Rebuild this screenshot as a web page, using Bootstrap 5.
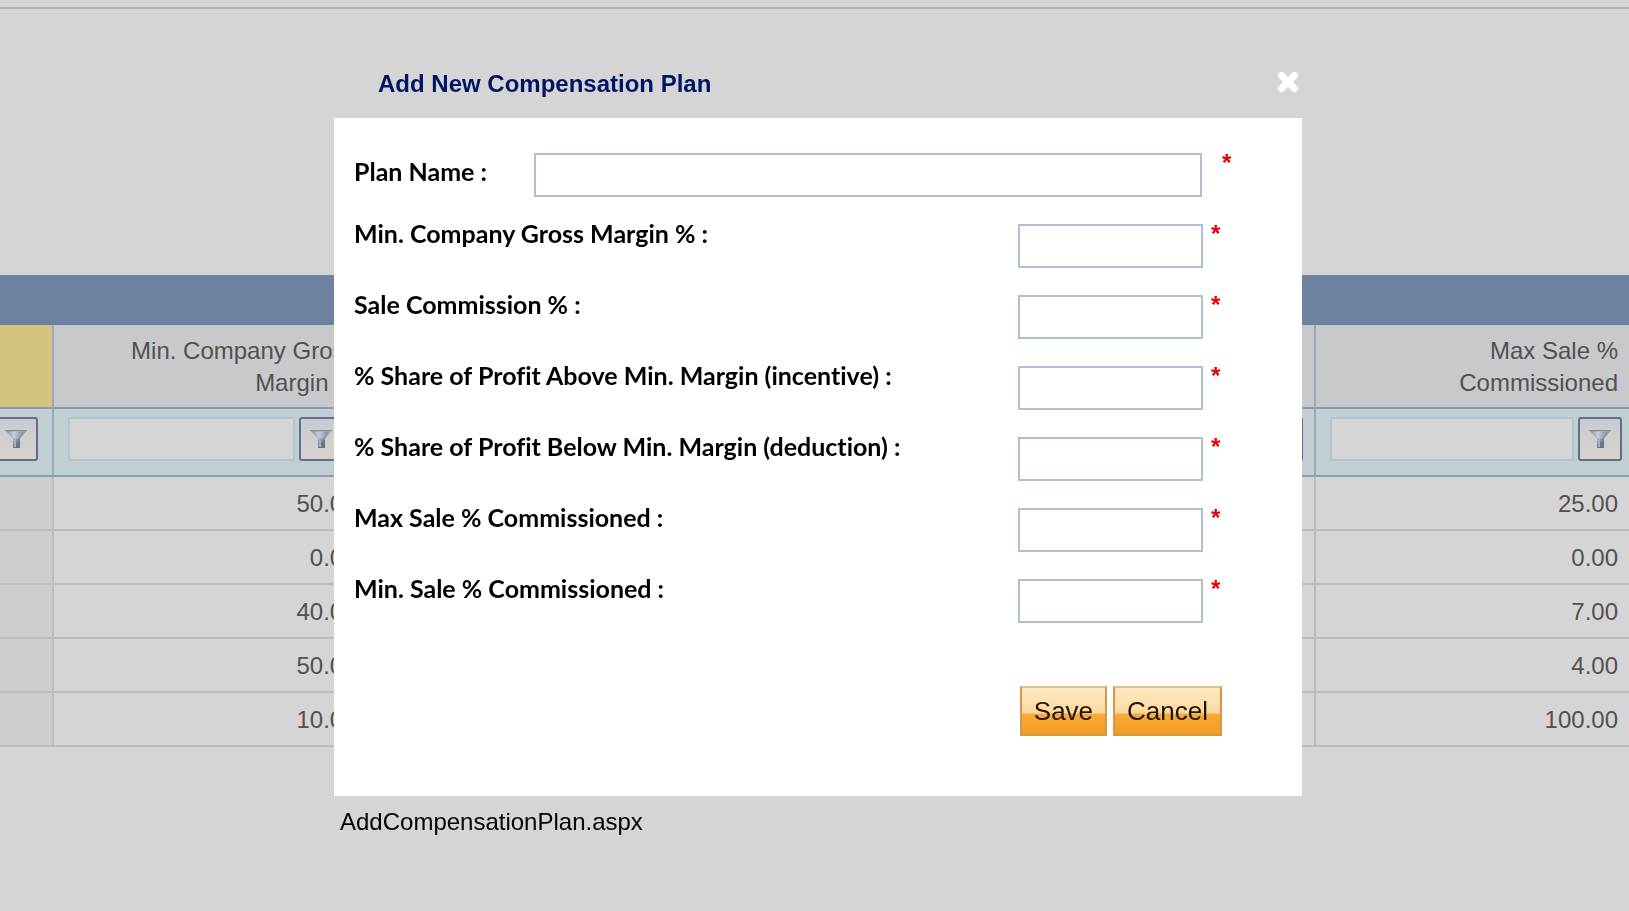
<!DOCTYPE html>
<html lang="en">
<head>
<meta charset="utf-8">
<meta name="viewport" content="width=device-width, initial-scale=1">
<title>Compensation Plans</title>
<link href="https://cdn.jsdelivr.net/npm/bootstrap@5.3.0/dist/css/bootstrap.min.css" rel="stylesheet">
<style>
  body { background: #d5d5d5; color: #515151; font-family: "Liberation Sans", Arial, sans-serif; font-size: 24px; line-height: 32px; overflow: hidden; }
  .page-top { height: 9px; border-bottom: 2px solid #b0b0b0; margin-bottom: 266px; }
  .grid-band { height: 50px; background: #6d829f; }
  .plan-grid { table-layout: fixed; width: 100%; border-collapse: separate; border-spacing: 0; }
  .plan-grid .col-name { width: 54px; }
  .plan-grid .col-last { width: 313px; }
  .plan-grid th, .plan-grid td { border: 0 solid #b9bdc3; border-width: 0 2px 2px 0; padding: 2px 11px 0 12px; text-align: right; font-weight: 400; }
  .plan-grid tr > :last-child { border-right-width: 0; }
  .plan-grid thead th, .plan-grid thead td { border-bottom-color: #8a9bb5; border-right-color: #9aaac3; }
  .plan-grid thead th { height: 84px; background: #c8c9cb; }
  .plan-grid thead th.sorted { background: #d4c481; }
  .plan-grid thead td { height: 68px; background: #c1cfd2; padding: 8px 7px 14px 14px; }
  .plan-grid thead td:first-child { padding-left: 0; padding-right: 14px; }
  .plan-grid tbody td { height: 54px; }
  .plan-grid tbody td:first-child { background: #cdcdcd; }
  .filter-box { min-width: 0; height: 44px; border: 2px solid #b5c4d3; border-radius: 0; background: #d5d5d5; }
  .filter-btn { flex: none; width: 44px; height: 44px; padding: 0; border: 2px solid #5d708c; border-radius: 3px; background: linear-gradient(#c9cbd0, #d3d0cf 60%, #d6d2d0); display: flex; align-items: center; justify-content: center; }
  .filter-short { padding-right: 18px; }
  .plan-modal { padding-left: 7px; color: #000; }
  .plan-modal .modal-dialog { max-width: 968px; margin: 0 auto; pointer-events: auto; }
  .plan-head { height: 118px; padding: 68px 3px 0 44px; }
  .plan-head h1 { font-size: 24px; line-height: 32px; font-weight: 700; color: #001464; margin: 0; }
  .close-x { border: 0; padding: 0; background: none; height: 28px; display: flex; align-items: center; }
  .plan-form { background: #fff; padding: 30px 71px 60px 20px; }
  .form-line { height: 71px; }
  .form-line label { font-family: Lato, sans-serif; font-size: 25px; font-weight: 700; line-height: 28px; font-variant-ligatures: none; }
  .form-line .first-label { width: 180px; padding-top: 9px; }
  .entry { height: 44px; margin-top: 5px; border: 2px solid #afc0d3; border-radius: 0; }
  .entry-num { width: 185px; flex: none; }
  .req { width: 28px; flex: none; line-height: 30px; font-weight: 700; color: #e60000; padding-left: 8px; }
  .req-wide { width: 29px; padding-left: 20px; }
  .form-actions { margin-top: 41px; padding-right: 9px; gap: 6px; }
  .gold-btn { height: 50px; padding: 0 12px; border: 2px solid #cf9a4a; border-top: 2px solid #dcc190; border-radius: 0; color: #1e1608; font-size: 26px; line-height: 44px; background: linear-gradient(#ffeac0, #ffd8a0 54%, #f9a935 57%, #f39d20); }
  .gold-btn:hover { background: #f9a935; }
  .page-name { padding: 10px 6px; }
</style>
</head>
<body>
<svg width="0" height="0" class="position-absolute" aria-hidden="true">
  <defs>
    <linearGradient id="steel" x1="0" x2="1" y1="0" y2="1">
      <stop offset="0" stop-color="#7d8894"/><stop offset=".4" stop-color="#a9bac8"/><stop offset=".65" stop-color="#6c7987"/><stop offset="1" stop-color="#5c6671"/>
    </linearGradient>
    <linearGradient id="shine" x1="0" x2="1">
      <stop offset="0" stop-color="#93a3b1"/><stop offset=".4" stop-color="#c2d2e0"/><stop offset="1" stop-color="#7f8d9b"/>
    </linearGradient>
    <symbol id="funnel" viewBox="0 0 22 20">
      <path d="M0 1h22l-7 8.500V19H8V9.500z" fill="url(#steel)"/>
      <path d="M2.500 2.500h16L13 9.500h-3.500z" fill="url(#shine)"/>
      <path d="M0 1.500h22" stroke="#7f8a96"/>
      <path d="M10 9.500v8.500" stroke="#a3b3c1" stroke-width="2"/>
    </symbol>
  </defs>
</svg>

<header class="page-top"></header>
<main>
  <div class="grid-band"></div>
  <table class="plan-grid">
    <colgroup><col class="col-name"><col><col><col><col><col class="col-last"></colgroup>
    <thead>
      <tr>
        <th class="sorted"></th>
        <th>Min. Company Gross Margin %</th>
        <th></th><th></th><th></th>
        <th>Max Sale % Commissioned</th>
      </tr>
      <tr>
        <td><div class="d-flex justify-content-end"><button class="filter-btn" type="button" aria-label="Filter"><svg width="22" height="20"><use href="#funnel"/></svg></button></div></td>
        <td><div class="d-flex gap-1 filter-short"><input class="form-control filter-box" aria-label="Filter gross margin"><button class="filter-btn" type="button" aria-label="Filter"><svg width="22" height="20"><use href="#funnel"/></svg></button></div></td>
        <td></td><td></td>
        <td><div class="d-flex gap-1 pe-1"><input class="form-control filter-box" aria-label="Filter share"><button class="filter-btn" type="button" aria-label="Filter"><svg width="22" height="20"><use href="#funnel"/></svg></button></div></td>
        <td><div class="d-flex gap-1"><input class="form-control filter-box" aria-label="Filter max sale"><button class="filter-btn" type="button" aria-label="Filter"><svg width="22" height="20"><use href="#funnel"/></svg></button></div></td>
      </tr>
    </thead>
    <tbody>
      <tr><td></td><td>50.00</td><td></td><td></td><td></td><td>25.00</td></tr>
      <tr><td></td><td>0.00</td><td></td><td></td><td></td><td>0.00</td></tr>
      <tr><td></td><td>40.00</td><td></td><td></td><td></td><td>7.00</td></tr>
      <tr><td></td><td>50.00</td><td></td><td></td><td></td><td>4.00</td></tr>
      <tr><td></td><td>10.00</td><td></td><td></td><td></td><td>100.00</td></tr>
    </tbody>
  </table>
</main>

<div class="modal d-block plan-modal" role="dialog" aria-labelledby="planTitle">
  <div class="modal-dialog">
    <div class="plan-head d-flex justify-content-between align-items-start">
      <h1 id="planTitle">Add New Compensation Plan</h1>
      <button class="close-x" type="button" aria-label="Close"><svg width="22" height="22" viewBox="0 0 22 22"><path d="M4.500 4.500l13 13M17.500 4.500l-13 13" stroke="#fff" stroke-width="7" stroke-linecap="round"/></svg></button>
    </div>
    <form class="plan-form">
      <div class="form-line d-flex align-items-start">
        <label class="first-label" for="planName">Plan Name :</label>
        <input class="form-control entry flex-fill w-auto" id="planName"><span class="req req-wide">*</span>
      </div>
      <div class="form-line d-flex align-items-start">
        <label class="flex-fill" for="minMargin">Min. Company Gross Margin % :</label>
        <input class="form-control entry entry-num" id="minMargin"><span class="req">*</span>
      </div>
      <div class="form-line d-flex align-items-start">
        <label class="flex-fill" for="saleComm">Sale Commission % :</label>
        <input class="form-control entry entry-num" id="saleComm"><span class="req">*</span>
      </div>
      <div class="form-line d-flex align-items-start">
        <label class="flex-fill" for="shareAbove">% Share of Profit Above Min. Margin (incentive) :</label>
        <input class="form-control entry entry-num" id="shareAbove"><span class="req">*</span>
      </div>
      <div class="form-line d-flex align-items-start">
        <label class="flex-fill" for="shareBelow">% Share of Profit Below Min. Margin (deduction) :</label>
        <input class="form-control entry entry-num" id="shareBelow"><span class="req">*</span>
      </div>
      <div class="form-line d-flex align-items-start">
        <label class="flex-fill" for="maxSale">Max Sale % Commissioned :</label>
        <input class="form-control entry entry-num" id="maxSale"><span class="req">*</span>
      </div>
      <div class="form-line d-flex align-items-start">
        <label class="flex-fill" for="minSale">Min. Sale % Commissioned :</label>
        <input class="form-control entry entry-num" id="minSale"><span class="req">*</span>
      </div>
      <div class="form-actions d-flex justify-content-end">
        <button class="btn gold-btn" type="button">Save</button>
        <button class="btn gold-btn" type="button">Cancel</button>
      </div>
    </form>
    <div class="page-name">AddCompensationPlan.aspx</div>
  </div>
</div>
<script src="https://cdn.jsdelivr.net/npm/bootstrap@5.3.0/dist/js/bootstrap.bundle.min.js"></script>
</body>
</html>
